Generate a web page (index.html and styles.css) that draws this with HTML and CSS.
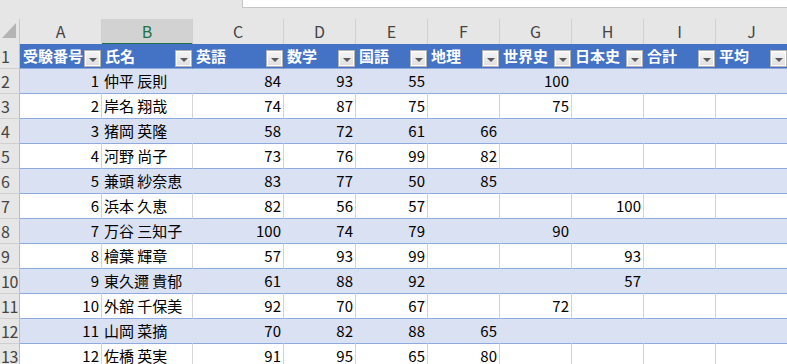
FILE: index.html
```html
<!DOCTYPE html>
<html lang="ja">
<head>
  <meta charset="UTF-8" />
  <title>成績一覧</title>
  <link rel="stylesheet" href="styles.css">
</head>
<body>
  <div class="sheet">
    <div class="topbar">
      <div class="formula"></div>
    </div>

    <div class="row colhead">
      <div class="corner">
        <svg width="19" height="24" viewBox="0 0 19 24"><polygon points="16,4 16,19 2,19" fill="#b4b4b4"/></svg>
      </div>
      <div class="letter">A</div>
      <div class="letter selected">B</div>
      <div class="letter">C</div>
      <div class="letter">D</div>
      <div class="letter">E</div>
      <div class="letter">F</div>
      <div class="letter">G</div>
      <div class="letter">H</div>
      <div class="letter">I</div>
      <div class="letter">J</div>
    </div>

    <div class="row head">
      <div class="rownum">1</div>
      <div class="c"><span>受験番号</span><i class="filter"></i></div>
      <div class="c"><span>氏名</span><i class="filter"></i></div>
      <div class="c"><span>英語</span><i class="filter"></i></div>
      <div class="c"><span>数学</span><i class="filter"></i></div>
      <div class="c"><span>国語</span><i class="filter"></i></div>
      <div class="c"><span>地理</span><i class="filter"></i></div>
      <div class="c"><span>世界史</span><i class="filter"></i></div>
      <div class="c"><span>日本史</span><i class="filter"></i></div>
      <div class="c"><span>合計</span><i class="filter"></i></div>
      <div class="c"><span>平均</span><i class="filter"></i></div>
    </div>

    <div class="row band">
      <div class="rownum">2</div>
      <div class="c n">1</div><div class="c">仲平 辰則</div>
      <div class="c n">84</div><div class="c n">93</div><div class="c n">55</div><div class="c n"></div>
      <div class="c n">100</div><div class="c n"></div><div class="c n"></div><div class="c n"></div>
    </div>
    <div class="row">
      <div class="rownum">3</div>
      <div class="c n">2</div><div class="c">岸名 翔哉</div>
      <div class="c n">74</div><div class="c n">87</div><div class="c n">75</div><div class="c n"></div>
      <div class="c n">75</div><div class="c n"></div><div class="c n"></div><div class="c n"></div>
    </div>
    <div class="row band">
      <div class="rownum">4</div>
      <div class="c n">3</div><div class="c">猪岡 英隆</div>
      <div class="c n">58</div><div class="c n">72</div><div class="c n">61</div><div class="c n">66</div>
      <div class="c n"></div><div class="c n"></div><div class="c n"></div><div class="c n"></div>
    </div>
    <div class="row">
      <div class="rownum">5</div>
      <div class="c n">4</div><div class="c">河野 尚子</div>
      <div class="c n">73</div><div class="c n">76</div><div class="c n">99</div><div class="c n">82</div>
      <div class="c n"></div><div class="c n"></div><div class="c n"></div><div class="c n"></div>
    </div>
    <div class="row band">
      <div class="rownum">6</div>
      <div class="c n">5</div><div class="c">兼頭 紗奈恵</div>
      <div class="c n">83</div><div class="c n">77</div><div class="c n">50</div><div class="c n">85</div>
      <div class="c n"></div><div class="c n"></div><div class="c n"></div><div class="c n"></div>
    </div>
    <div class="row">
      <div class="rownum">7</div>
      <div class="c n">6</div><div class="c">浜本 久恵</div>
      <div class="c n">82</div><div class="c n">56</div><div class="c n">57</div><div class="c n"></div>
      <div class="c n"></div><div class="c n">100</div><div class="c n"></div><div class="c n"></div>
    </div>
    <div class="row band">
      <div class="rownum">8</div>
      <div class="c n">7</div><div class="c">万谷 三知子</div>
      <div class="c n">100</div><div class="c n">74</div><div class="c n">79</div><div class="c n"></div>
      <div class="c n">90</div><div class="c n"></div><div class="c n"></div><div class="c n"></div>
    </div>
    <div class="row">
      <div class="rownum">9</div>
      <div class="c n">8</div><div class="c">檜葉 輝章</div>
      <div class="c n">57</div><div class="c n">93</div><div class="c n">99</div><div class="c n"></div>
      <div class="c n"></div><div class="c n">93</div><div class="c n"></div><div class="c n"></div>
    </div>
    <div class="row band">
      <div class="rownum">10</div>
      <div class="c n">9</div><div class="c">東久邇 貴郁</div>
      <div class="c n">61</div><div class="c n">88</div><div class="c n">92</div><div class="c n"></div>
      <div class="c n"></div><div class="c n">57</div><div class="c n"></div><div class="c n"></div>
    </div>
    <div class="row">
      <div class="rownum">11</div>
      <div class="c n">10</div><div class="c">外舘 千保美</div>
      <div class="c n">92</div><div class="c n">70</div><div class="c n">67</div><div class="c n"></div>
      <div class="c n">72</div><div class="c n"></div><div class="c n"></div><div class="c n"></div>
    </div>
    <div class="row band">
      <div class="rownum">12</div>
      <div class="c n">11</div><div class="c">山岡 菜摘</div>
      <div class="c n">70</div><div class="c n">82</div><div class="c n">88</div><div class="c n">65</div>
      <div class="c n"></div><div class="c n"></div><div class="c n"></div><div class="c n"></div>
    </div>
    <div class="row">
      <div class="rownum">13</div>
      <div class="c n">12</div><div class="c">佐橋 英実</div>
      <div class="c n">91</div><div class="c n">95</div><div class="c n">65</div><div class="c n">80</div>
      <div class="c n"></div><div class="c n"></div><div class="c n"></div><div class="c n"></div>
    </div>
  </div>
</body>
</html>
```

FILE: styles.css
```css
* { box-sizing: border-box; }

body {
  margin: 0;
  background: #e6e6e6;
  font-family: 'Noto Sans CJK JP', 'Noto Sans', sans-serif;
  font-size: 15px;
  color: #000;
  overflow: hidden;
}

.sheet {
  width: 787px;
  height: 364px;
  overflow: hidden;
}

.topbar {
  height: 19px;
  display: flex;
}

.formula {
  margin-left: 242px;
  flex: 1;
  height: 8px;
  background: #fff;
  border-left: 1px solid #c6c6c6;
  border-bottom: 1px solid #c6c6c6;
}

.row {
  display: grid;
  grid-template-columns: 20px 82px 91px 91px repeat(7, 72px);
  height: 25px;
  background: #fff;
}

/* column letters */
.colhead {
  background: #e6e6e6;
}

.corner {
  border-right: 1px solid #c8c8c8;
  border-bottom: 1px solid #bdbdbd;
}

.corner svg { display: block; }

.letter {
  border-right: 1px solid #d0d0d0;
  border-bottom: 1px solid #bdbdbd;
  text-align: center;
  font-size: 16px;
  line-height: 24px;
  color: #444;
}

.letter.selected {
  background: #d2d2d2;
  color: #217346;
  border-bottom: 2px solid #217346;
}

/* row numbers */
.rownum {
  background: #e6e6e6;
  border-right: 1px solid #bdbdbd;
  border-bottom: 1px solid #cfcfcf;
  padding-left: 1px;
  font-size: 16px;
  letter-spacing: -0.5px;
  line-height: 24px;
  color: #444;
  white-space: nowrap;
}

/* table cells */
.c {
  border-right: 1px solid #d4d4d4;
  border-bottom: 1px solid #8ea9db;
  padding: 0 2px;
  line-height: 24px;
  white-space: nowrap;
  overflow: hidden;
}

.c.n { text-align: right; }

.band .c {
  background: #d9e1f2;
  border-right-color: #d9e1f2;
}

.head .c {
  background: #4472c4;
  border-right-color: #4472c4;
  color: #fff;
  font-weight: 700;
  display: flex;
  padding: 0 0 0 3px;
}

.filter {
  margin-left: auto;
  align-self: flex-end;
  margin-bottom: 1px;
  width: 17px;
  height: 17px;
  flex: none;
  border: 1px solid #b4b4b4;
  background: linear-gradient(#f6f6f6, #dedede);
  box-shadow: inset 0 0 0 1px #fff;
  display: flex;
  align-items: center;
  justify-content: center;
  padding-top: 2px;
}

.filter::after {
  content: "";
  border-left: 4px solid transparent;
  border-right: 4px solid transparent;
  border-top: 4px solid #5a5a5a;
}
```
